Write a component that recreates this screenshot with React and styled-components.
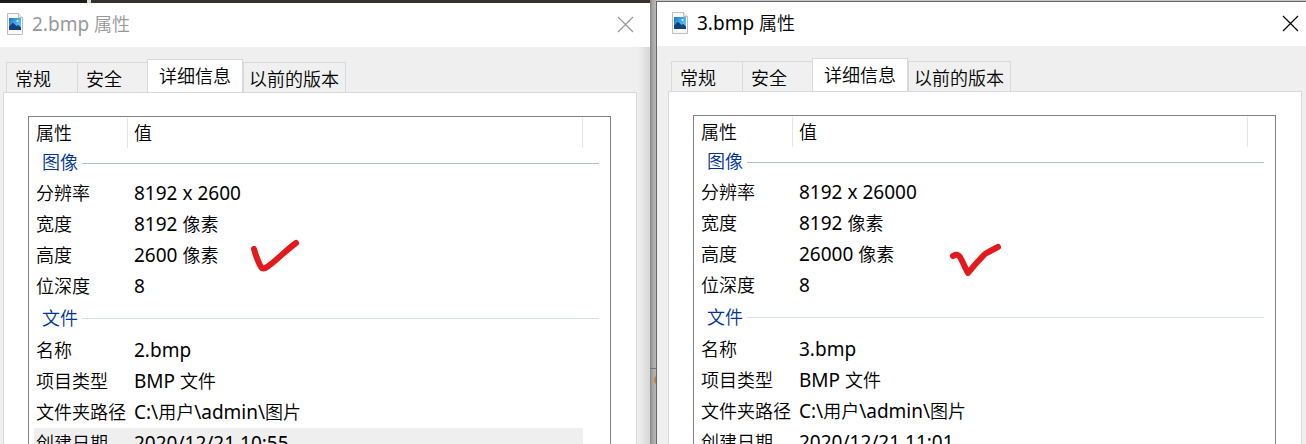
import React from "react";
import styled, { createGlobalStyle } from "styled-components";

const GlobalStyle = createGlobalStyle`
  * { box-sizing: border-box; }
  body {
    margin: 0;
    background: #fff;
    color: #000;
    font: 350 18px/24px "Noto Sans CJK SC", sans-serif;
  }
  button { font: inherit; color: inherit; }
`;

const Desktop = styled.main`
  display: flex;
  height: 100vh;
  overflow: hidden;
`;

const Side = styled.div`
  flex: 1 1 0;
  min-width: 0;
  display: flex;
  flex-direction: column;
`;

const DarkStrip = styled.div`
  flex: none;
  display: flex;
  height: 3px;
  background: #35322e;
`;

const StripPart = styled.span`
  width: ${(p) => p.$width}px;
  background: ${(p) => p.$color};
`;

const LightStrip = styled.div`
  flex: none;
  height: 1px;
  background: #c6c6c6;
`;

const Gutter = styled.div`
  flex: none;
  width: 6px;
  overflow: hidden;
  display: flex;
  flex-direction: column;
  background: linear-gradient(90deg, #858585, #a4a4a4 40%, #b8b8b8);
`;

const GutterRule = styled.span`
  margin-top: 368px;
  height: 1px;
  background: #747474;
`;

const GutterDot = styled.span`
  width: 12px;
  height: 12px;
  margin: 5px 0 0 4px;
  border-radius: 50%;
  background: #c9822c;
`;

const Window = styled.section`
  flex: 1;
  display: flex;
  flex-direction: column;
  background: #efefef;
  border-style: solid;
  border-color: #666;
  border-width: ${(p) => (p.$active ? "1px 0 0 1px" : "0")};
`;

const TitleBar = styled.header`
  flex: none;
  display: flex;
  align-items: center;
  height: 44px;
  padding: ${(p) => (p.$active ? "0 7px 2px 15px" : "0 16px 2px 7px")};
  background: #fff;
  color: ${(p) => (p.$active ? "#000" : "#999")};
`;

const Title = styled.h1`
  flex: 1;
  margin: 0 0 0 9px;
  padding-bottom: 2px;
  font-size: 18px;
  font-weight: inherit;
`;

const CloseButton = styled.button`
  display: flex;
  padding: 0;
  border: 0;
  background: none;
`;

const Body = styled.div`
  flex: 1;
  display: flex;
  flex-direction: column;
  padding: ${(p) => (p.$active ? "12px 4px 0 11px" : "12px 13px 0 3px")};
  background: ${(p) =>
    p.$active ? "#efefef" : "linear-gradient(270deg, #d6d6d6, #efefef 12px)"};
`;

const Tabs = styled.div`
  display: flex;
  align-items: flex-end;
  padding-left: 3px;
`;

const Tab = styled.button`
  width: ${(p) => p.$width}px;
  height: ${(p) => (p.$selected ? 34 : 30)}px;
  margin-bottom: ${(p) => (p.$selected ? -1 : 0)}px;
  padding: ${(p) => (p.$selected ? "0 0 4px 11px" : `0 0 0 ${p.$inset}px`)};
  border: 1px solid #d9d9d9;
  border-right-width: ${(p) => (p.$edge ? 1 : 0)}px;
  border-bottom: 0;
  background: ${(p) => (p.$selected ? "#fff" : "#f0f0f0")};
  text-align: left;
  white-space: nowrap;
`;

const Pane = styled.div`
  flex: 1;
  padding: 23px 25px 0 24px;
  border: 1px solid #d9d9d9;
  border-bottom: 0;
  background: #fff;
`;

const List = styled.div`
  height: 100%;
  padding: 1px 0 0 5px;
  border: 1px solid #828282;
  border-bottom: 0;
`;

const Table = styled.table`
  width: 100%;
  table-layout: fixed;
  border-collapse: separate;
  border-spacing: 0;
`;

const Column = styled.col`
  width: ${(p) => p.$width};
`;

const HeadCell = styled.th`
  height: 30px;
  padding: 0 0 2px ${(p) => p.$inset}px;
  border-right: ${(p) => (p.$last ? "0" : "1px solid #e5e5e5")};
  font-weight: inherit;
  text-align: left;
`;

const GroupCell = styled.th`
  height: ${(p) => p.$height}px;
  padding: 0 11px 0 8px;
  color: #003399;
  font-weight: inherit;
`;

const GroupLine = styled.div`
  display: flex;
  align-items: center;
  gap: 4px;

  &::after {
    content: "";
    flex: 1;
    height: 1px;
    background: ${(p) => p.$rule};
  }
`;

const GroupName = styled.span`
  padding-bottom: 4px;
`;

const Row = styled.tr`
  background: ${(p) => (p.$selected ? "#efefef" : "none")};
`;

const NameCell = styled.th`
  height: 31px;
  padding: 0 0 4px 2px;
  font-weight: inherit;
  text-align: left;
  white-space: nowrap;
`;

const ValueCell = styled.td`
  position: relative;
  padding: 0 0 2px 6px;
  white-space: nowrap;
`;

const EndCell = styled.td`
  padding: 0;
  background: #fff;
`;

const Latin = styled.span`
  font-family: "Noto Sans", sans-serif;
  font-size: 19px;
  font-weight: 400;
`;

const Mark = styled.svg`
  position: absolute;
  top: -3px;
  left: ${(p) => p.$left}px;
`;

function Mixed({ children }) {
  return children
    .split(/([\x20-\x7e]+)/)
    .filter(Boolean)
    .map((part, i) =>
      /^[\x20-\x7e]+$/.test(part) ? <Latin key={i}>{part}</Latin> : part
    );
}

function FileIcon({ id }) {
  return (
    <svg width="16" height="22" viewBox="0 0 16 22" aria-hidden="true">
      <defs>
        <linearGradient id={id} x1="0" y1="0" x2="1" y2="0.6">
          <stop offset="0" stopColor="#1b78cc" />
          <stop offset="1" stopColor="#5fcbf5" />
        </linearGradient>
      </defs>
      <path d="M.5.5h11l4 4v17H.5z" fill="#fafafa" stroke="#bdbdbd" />
      <path d="M11.5.5v4h4" fill="#eee" stroke="#bdbdbd" />
      <rect x="2" y="5" width="12" height="12" fill={`url(#${id})`} />
      <path d="M2 13.500l3-3q1-1 2 0l2.500 2.500 1-.8q.8-.5 1.500.2l2 2V17H2z" fill="#163f80" />
      <circle cx="10.500" cy="8" r="1" fill="#e4f7ff" />
    </svg>
  );
}

const TABS = [
  { label: "常规", width: 71, inset: 8 },
  { label: "安全", width: 70, inset: 8 },
  { label: "详细信息", width: 96, selected: true },
  { label: "以前的版本", width: 103, inset: 5, edge: true },
];

function PropertiesWindow({ name, active, size, height, created, selectDate, mark }) {
  const groups = [
    {
      title: "图像",
      height: 30,
      rule: "#b0bdd2",
      rows: [
        ["分辨率", size],
        ["宽度", "8192 像素"],
        ["高度", height, mark],
        ["位深度", "8"],
      ],
    },
    {
      title: "文件",
      height: 33,
      rule: "#d6dde8",
      rows: [
        ["名称", name],
        ["项目类型", "BMP 文件"],
        ["文件夹路径", "C:\\用户\\admin\\图片"],
        ["创建日期", created],
      ],
    },
  ];
  return (
    <Window $active={active}>
      <TitleBar $active={active}>
        <FileIcon id={active ? "sky-active" : "sky-idle"} />
        <Title>
          <Mixed>{`${name} 属性`}</Mixed>
        </Title>
        <CloseButton aria-label="关闭">
          <svg width="17" height="17" viewBox="0 0 17 17" fill="none" stroke="currentColor">
            <path d="M1 1l15 15M16 1L1 16" strokeWidth="1.200" />
          </svg>
        </CloseButton>
      </TitleBar>
      <Body $active={active}>
        <Tabs role="tablist">
          {TABS.map((t) => (
            <Tab
              key={t.label}
              role="tab"
              aria-selected={!!t.selected}
              $width={t.width}
              $inset={t.inset}
              $selected={t.selected}
              $edge={t.edge || t.selected}
            >
              {t.label}
            </Tab>
          ))}
        </Tabs>
        <Pane role="tabpanel">
          <List>
            <Table>
              <colgroup>
                <Column $width="94px" />
                <Column $width="auto" />
                <Column $width="27px" />
              </colgroup>
              <thead>
                <tr>
                  <HeadCell $inset={2}>属性</HeadCell>
                  <HeadCell $inset={6}>值</HeadCell>
                  <HeadCell $inset={0} $last />
                </tr>
              </thead>
              {groups.map((g) => (
                <tbody key={g.title}>
                  <tr>
                    <GroupCell colSpan={3} $height={g.height}>
                      <GroupLine $rule={g.rule}>
                        <GroupName>{g.title}</GroupName>
                      </GroupLine>
                    </GroupCell>
                  </tr>
                  {g.rows.map(([label, value, tick]) => (
                    <Row key={label} $selected={selectDate && label === "创建日期"}>
                      <NameCell scope="row">{label}</NameCell>
                      <ValueCell>
                        <Mixed>{value}</Mixed>
                        {tick && (
                          <Mark $left={tick.left} width="56" height="42" aria-hidden="true">
                            <path
                              d={tick.path}
                              fill="none"
                              stroke="#e3191c"
                              strokeWidth="6"
                              strokeLinecap="round"
                              strokeLinejoin="round"
                            />
                          </Mark>
                        )}
                      </ValueCell>
                      <EndCell />
                    </Row>
                  ))}
                </tbody>
              ))}
            </Table>
          </List>
        </Pane>
      </Body>
    </Window>
  );
}

export default function App() {
  return (
    <>
      <GlobalStyle />
      <Desktop>
        <Side>
          <DarkStrip>
            <StripPart $width={87} $color="#1d1c1b" />
            <StripPart $width={4} $color="#dadada" />
          </DarkStrip>
          <PropertiesWindow
            name="2.bmp"
            size="8192 x 2600"
            height="2600 像素"
            created="2020/12/21 10:55"
            selectDate
            mark={{ left: 120, path: "M6 12C8 19 10 25 13 30Q15 33 19 30C27 25 37 14 48 6" }}
          />
        </Side>
        <Gutter>
          <GutterRule />
          <GutterDot />
        </Gutter>
        <Side>
          <LightStrip />
          <PropertiesWindow
            name="3.bmp"
            active
            size="8192 x 26000"
            height="26000 像素"
            created="2020/12/21 11:01"
            mark={{ left: 154, path: "M6 20Q10 17 13 21C16 26 18 32 21 37Q29 27 38 18Q43 15 51 11" }}
          />
        </Side>
      </Desktop>
    </>
  );
}
